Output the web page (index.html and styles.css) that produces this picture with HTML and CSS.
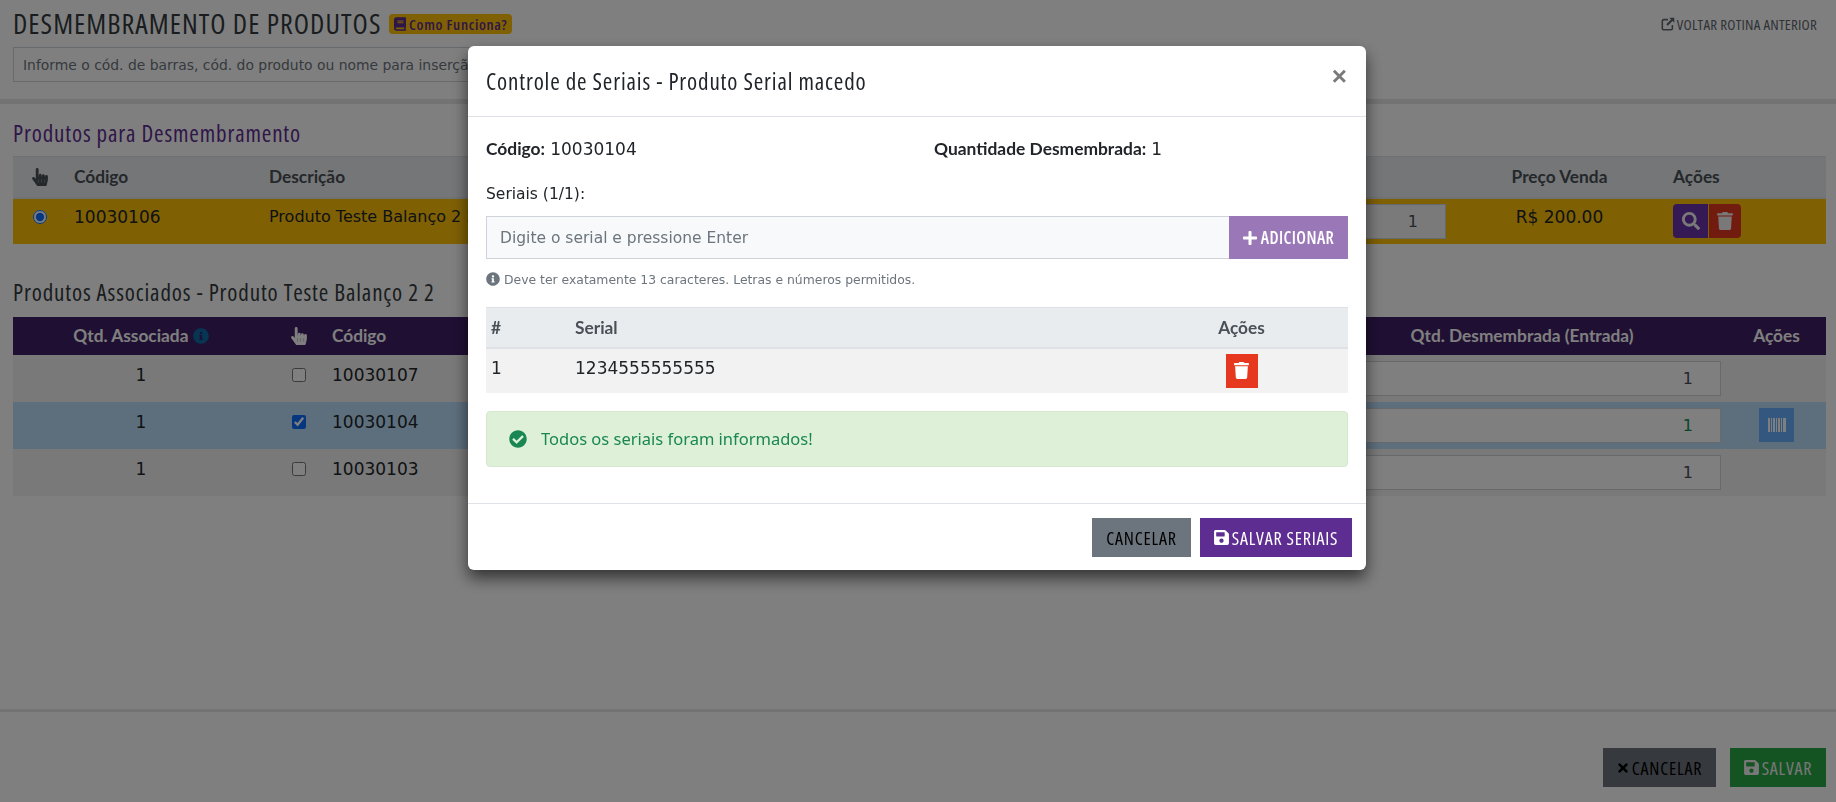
FILE: index.html
```html
<!DOCTYPE html>
<html lang="pt-BR">
<head>
<meta charset="utf-8">
<title>Desmembramento de Produtos</title>
<link rel="stylesheet" href="styles.css">
</head>
<body>
<svg class="sprite" aria-hidden="true">
  <symbol id="i-trash" viewBox="0 0 448 512"><path d="M432 32H312l-9.4-18.7A24 24 0 0 0 281.1 0H166.8a23.72 23.72 0 0 0-21.4 13.3L136 32H16A16 16 0 0 0 0 48v32a16 16 0 0 0 16 16h416a16 16 0 0 0 16-16V48a16 16 0 0 0-16-16zM53.2 467a48 48 0 0 0 47.9 45h245.8a48 48 0 0 0 47.9-45L416 128H32z"/></symbol>
  <symbol id="i-search" viewBox="0 0 512 512"><path d="M505 442.7L405.3 343c-4.5-4.5-10.6-7-17-7H372c27.6-35.3 44-79.7 44-128C416 93.1 322.9 0 208 0S0 93.1 0 208s93.1 208 208 208c48.3 0 92.7-16.4 128-44v16.3c0 6.4 2.5 12.5 7 17l99.7 99.7c9.4 9.4 24.6 9.4 33.9 0l28.3-28.3c9.4-9.4 9.4-24.6.1-34zM208 336c-70.7 0-128-57.2-128-128 0-70.7 57.2-128 128-128 70.7 0 128 57.2 128 128 0 70.7-57.2 128-128 128z"/></symbol>
  <symbol id="i-save" viewBox="0 0 448 512"><path d="M433.941 129.941l-83.882-83.882A48 48 0 0 0 316.118 32H48C21.49 32 0 53.49 0 80v352c0 26.51 21.49 48 48 48h352c26.51 0 48-21.49 48-48V163.882a48 48 0 0 0-14.059-33.941zM224 416c-35.346 0-64-28.654-64-64 0-35.346 28.654-64 64-64s64 28.654 64 64c0 35.346-28.654 64-64 64zm96-304.52V212c0 6.627-5.373 12-12 12H76c-6.627 0-12-5.373-12-12V108c0-6.627 5.373-12 12-12h228.52c3.183 0 6.235 1.264 8.485 3.515l3.48 3.48A11.996 11.996 0 0 1 320 111.48z"/></symbol>
  <symbol id="i-info" viewBox="0 0 512 512"><path d="M256 8C119.043 8 8 119.083 8 256c0 136.997 111.043 248 248 248s248-111.003 248-248C504 119.083 392.957 8 256 8zm0 110c23.196 0 42 18.804 42 42s-18.804 42-42 42-42-18.804-42-42 18.804-42 42-42zm56 254c0 6.627-5.373 12-12 12h-88c-6.627 0-12-5.373-12-12v-24c0-6.627 5.373-12 12-12h12v-64h-12c-6.627 0-12-5.373-12-12v-24c0-6.627 5.373-12 12-12h64c6.627 0 12 5.373 12 12v100h12c6.627 0 12 5.373 12 12v24z"/></symbol>
  <symbol id="i-check" viewBox="0 0 512 512"><path d="M504 256c0 136.967-111.033 248-248 248S8 392.967 8 256 119.033 8 256 8s248 111.033 248 248zM227.314 387.314l184-184c6.248-6.248 6.248-16.379 0-22.627l-22.627-22.627c-6.248-6.249-16.379-6.249-22.628 0L216 308.118l-70.059-70.059c-6.248-6.248-16.379-6.248-22.628 0l-22.627 22.627c-6.248 6.248-6.248 16.379 0 22.627l104 104c6.249 6.249 16.379 6.249 22.628.001z"/></symbol>
  <symbol id="i-plus" viewBox="0 0 448 512"><path d="M416 208H272V64c0-17.67-14.33-32-32-32h-32c-17.67 0-32 14.33-32 32v144H32c-17.67 0-32 14.33-32 32v32c0 17.67 14.33 32 32 32h144v144c0 17.67 14.33 32 32 32h32c17.67 0 32-14.33 32-32V304h144c17.67 0 32-14.33 32-32v-32c0-17.67-14.33-32-32-32z"/></symbol>
  <symbol id="i-times" viewBox="0 0 352 512"><path d="M242.72 256l100.07-100.07c12.28-12.28 12.28-32.19 0-44.48l-22.24-22.24c-12.28-12.28-32.19-12.28-44.48 0L176 189.28 75.93 89.21c-12.28-12.28-32.19-12.28-44.48 0L9.21 111.45c-12.28 12.28-12.28 32.19 0 44.48L109.28 256 9.21 356.07c-12.28 12.28-12.28 32.19 0 44.48l22.24 22.24c12.28 12.28 32.2 12.28 44.48 0L176 322.72l100.07 100.07c12.28 12.28 32.2 12.28 44.48 0l22.24-22.24c12.28-12.28 12.28-32.19 0-44.48L242.72 256z"/></symbol>
  <symbol id="i-book" viewBox="0 0 448 512"><path d="M448 360V24c0-13.3-10.7-24-24-24H96C43 0 0 43 0 96v320c0 53 43 96 96 96h328c13.3 0 24-10.7 24-24v-16c0-7.5-3.5-14.3-8.9-18.7-4.2-15.4-4.2-59.3 0-74.7 5.4-4.3 8.9-11.1 8.9-18.6zM128 134c0-3.3 2.7-6 6-6h212c3.3 0 6 2.7 6 6v20c0 3.3-2.7 6-6 6H134c-3.3 0-6-2.7-6-6v-20zm0 64c0-3.3 2.7-6 6-6h212c3.3 0 6 2.7 6 6v20c0 3.3-2.7 6-6 6H134c-3.3 0-6-2.7-6-6v-20zm253.4 250H96c-17.7 0-32-14.3-32-32 0-17.6 14.4-32 32-32h285.4c-1.9 17.1-1.9 46.9 0 64z"/></symbol>
  <symbol id="i-hand" viewBox="0 0 448 512"><path d="M448 240v96c0 3.084-.356 6.159-1.063 9.162l-32 136C410.686 499.23 394.562 512 376 512H168a40.004 40.004 0 0 1-32.35-16.473l-127.997-176c-12.993-17.866-9.043-42.883 8.822-55.876 17.867-12.994 42.884-9.043 55.877 8.823L104 315.992V40c0-22.091 17.908-40 40-40s40 17.909 40 40v200h8v-40c0-22.091 17.908-40 40-40s40 17.909 40 40v40h8v-24c0-22.091 17.908-40 40-40s40 17.909 40 40v24h8c0-22.091 17.908-40 40-40s40 17.909 40 40zm-256 80h-8v96h8v-96zm88 0h-8v96h8v-96zm88 0h-8v96h8v-96z"/></symbol>
  <symbol id="i-link" viewBox="0 0 16 16"><path d="M8 3H3a1.5 1.5 0 0 0-1.5 1.5v8.500A1.500 1.500 0 0 0 3 14.500h8.500A1.500 1.500 0 0 0 13 13V9" fill="none" stroke="currentColor" stroke-width="1.800"/><path d="M9.500 .8h5.700v5.700l-2-2-5.500 5.500-1.700-1.700 5.500-5.500z"/></symbol>
  <symbol id="i-barcode" viewBox="0 0 18 14"><path d="M0 0h2v14H0zM3 0h1v14H3zM5 0h2v14H5zM8 0h1v14H8zM10 0h2v14h-2zM13 0h1v14h-1zM15 0h3v14h-3z"/></symbol>
</svg>

<div class="page">
  <header class="top">
    <div class="top-row">
      <h1 class="page-title">DESMEMBRAMENTO DE PRODUTOS</h1>
      <span class="help-badge"><svg class="ico ico-book"><use href="#i-book"/></svg>Como Funciona?</span>
      <a class="back-link"><svg class="ico ico-link"><use href="#i-link"/></svg>VOLTAR ROTINA ANTERIOR</a>
    </div>
    <input class="search" type="text" placeholder="Informe o cód. de barras, cód. do produto ou nome para inserção e busca de produtos">
  </header>

  <main class="content">
    <h2 class="section-title purple">Produtos para Desmembramento</h2>
    <table class="grid grid-a">
      <colgroup><col class="a1"><col class="a2"><col class="a3"><col class="a4"><col class="a5"><col class="a6"></colgroup>
      <thead>
        <tr><th class="center"><svg class="ico ico-hand"><use href="#i-hand"/></svg></th><th class="pad">Código</th><th>Descrição</th><th></th><th class="center">Preço Venda</th><th>Ações</th></tr>
      </thead>
      <tbody>
        <tr class="row-amber">
          <td class="center top-cell"><input class="radio" type="radio" checked></td>
          <td class="num pad top-cell">10030106</td>
          <td class="top-cell">Produto Teste Balanço 2 2</td>
          <td class="qty-cell"><input class="qty qty-a num" value="1"></td>
          <td class="center num top-cell">R$ 200.00</td>
          <td><div class="btn-group"><span class="act act-purple"><svg class="ico ico-act"><use href="#i-search"/></svg></span><span class="act act-red"><svg class="ico ico-act"><use href="#i-trash"/></svg></span></div></td>
        </tr>
      </tbody>
    </table>

    <h2 class="section-title second">Produtos Associados - Produto Teste Balanço 2 2</h2>
    <table class="grid grid-b">
      <colgroup><col class="b1"><col class="b2"><col class="b3"><col class="b4"><col class="b5"><col class="b6"></colgroup>
      <thead>
        <tr><th class="center">Qtd. Associada <svg class="ico ico-th-info"><use href="#i-info"/></svg></th><th class="center"><svg class="ico ico-hand"><use href="#i-hand"/></svg></th><th class="pad-s">Código</th><th></th><th class="center">Qtd. Desmembrada (Entrada)</th><th class="center pad-act">Ações</th></tr>
      </thead>
      <tbody>
        <tr class="row-grey">
          <td class="center num lift">1</td><td class="center lift"><input class="check" type="checkbox"></td><td class="num pad-s lift">10030107</td><td></td>
          <td><input class="qty qty-b num" value="1"></td><td></td>
        </tr>
        <tr class="row-blue">
          <td class="center num lift">1</td><td class="center lift"><input class="check" type="checkbox" checked></td><td class="num pad-s lift">10030104</td><td></td>
          <td><input class="qty qty-b qty-ok num" value="1"></td><td class="center pad-act"><span class="barcode-btn"><svg class="ico ico-barcode"><use href="#i-barcode"/></svg></span></td>
        </tr>
        <tr class="row-grey">
          <td class="center num lift">1</td><td class="center lift"><input class="check" type="checkbox"></td><td class="num pad-s lift">10030103</td><td></td>
          <td><input class="qty qty-b num" value="1"></td><td></td>
        </tr>
      </tbody>
    </table>
  </main>

  <footer class="bottom">
    <button class="btn btn-dark"><svg class="ico ico-x"><use href="#i-times"/></svg>CANCELAR</button>
    <button class="btn btn-green"><svg class="ico ico-save"><use href="#i-save"/></svg>SALVAR</button>
  </footer>
</div>

<div class="backdrop">
  <section class="modal">
    <div class="modal-head">
      <h3 class="modal-title">Controle de Seriais - Produto Serial macedo</h3>
      <span class="close">&times;</span>
    </div>
    <div class="modal-body">
      <div class="facts">
        <div class="fact"><strong>Código:</strong> <span class="num">10030104</span></div>
        <div class="fact"><strong>Quantidade Desmembrada:</strong> <span class="num">1</span></div>
      </div>
      <label class="serial-label">Seriais (1/1):</label>
      <div class="input-group">
        <input class="serial-input" type="text" placeholder="Digite o serial e pressione Enter">
        <span class="add-btn"><svg class="ico ico-plus"><use href="#i-plus"/></svg>ADICIONAR</span>
      </div>
      <p class="hint"><svg class="ico ico-hint"><use href="#i-info"/></svg>Deve ter exatamente 13 caracteres. Letras e números permitidos.</p>
      <table class="serials">
        <colgroup><col class="s1"><col class="s2"><col class="s3"></colgroup>
        <thead><tr><th>#</th><th>Serial</th><th class="center">Ações</th></tr></thead>
        <tbody><tr><td class="num lift">1</td><td class="num lift">1234555555555</td><td class="center"><span class="del"><svg class="ico ico-del"><use href="#i-trash"/></svg></span></td></tr></tbody>
      </table>
      <div class="alert"><svg class="ico ico-ok"><use href="#i-check"/></svg>Todos os seriais foram informados!</div>
    </div>
    <div class="modal-foot">
      <button class="btn btn-grey">CANCELAR</button>
      <button class="btn btn-purple"><svg class="ico ico-save"><use href="#i-save"/></svg>SALVAR SERIAIS</button>
    </div>
  </section>
</div>
</body>
</html>
```

FILE: styles.css
```css
* { box-sizing: border-box; }
html, body { margin: 0; padding: 0; height: 100%; overflow: hidden; }
body { font-family: "DejaVu Sans", "Noto Sans", sans-serif; color: #212529; background: #fff; font-size: 16px; }
.sprite { display: none; }
.ico { fill: currentColor; display: inline-block; flex: none; }
.num { font-family: "DejaVu Sans", sans-serif; font-size: 17px; }
.center { text-align: center; }
.page-title, .help-badge, .back-link, .section-title, .modal-title, .btn, .add-btn { font-family: "Open Sans", sans-serif; font-stretch: 75%; }
.grid th, .serials th, .fact strong { font-family: "Lato", sans-serif; font-weight: 700; }

.page { height: 802px; display: flex; flex-direction: column; }
.top { height: 104px; padding: 12px 10px 0 13px; border-bottom: 5px solid #e6e6e6; }
.top-row { display: flex; align-items: center; height: 23px; }
.page-title { margin: 0; font-weight: 400; font-size: 28px; letter-spacing: 1.050px; line-height: 23px; color: #343a40; width: 376px; white-space: nowrap; }
.help-badge { display: flex; align-items: center; height: 20px; padding: 0 5px; background: #ffc107; border-radius: 4px; color: #5e2d91; font-size: 15px; letter-spacing: .65px; font-weight: 600; }
.ico-book { width: 12px; height: 14px; margin-right: 3px; }
.back-link { margin: 0 9px 0 auto; display: flex; align-items: center; font-size: 15px; letter-spacing: .2px; color: #5f6770; }
.ico-link { width: 14px; height: 14px; margin-right: 2px; }
.search { display: block; width: 1000px; height: 35px; margin-top: 12px; border: 1px solid #ced4da; padding: 0 9px; font: 400 13.900px "DejaVu Sans", sans-serif; background: #fff; }
.search::placeholder { color: #6c757d; }

.content { padding: 0 10px 0 13px; flex: 1; }
.section-title { margin: 16px 0 10px; font-weight: 400; font-size: 23px; letter-spacing: .85px; line-height: 26px; color: #343a40; }
.purple { color: #5e2d91; }
.second { margin: 35px 0 12px; }

.grid { width: 100%; table-layout: fixed; border-collapse: collapse; font-size: 16px; }
.grid th { font-size: 17.300px; text-align: left; padding: 0; }
.grid th.center { text-align: center; }
.grid td { padding: 0; vertical-align: middle; }
.grid .pad { padding-left: 7px; }
.grid .pad-s { padding-left: 3px; }
.grid .pad-act { padding-left: 6px; }
.grid .lift { padding-bottom: 6px; }
.grid-a thead tr { height: 41px; background: #e9ecef; color: #495057; border-top: 1px solid #dee2e6; border-bottom: 2px solid #dee2e6; }
.grid-a tbody tr { height: 46px; }
.row-amber { background: #ffc107; }
.grid .top-cell { vertical-align: top; padding-top: 8px; }
.a1 { width: 54px; } .a2 { width: 202px; } .a3 { width: 660px; } .a4 { width: 517px; } .a5 { width: 227px; } .a6 { width: 153px; }
.ico-hand { width: 16px; height: 18px; vertical-align: -3px; }

.grid-b thead tr { height: 38px; background: #3f1f66; color: #fff; }
.grid-b tbody tr { height: 47px; }
.row-grey { background: #f2f2f2; }
.row-blue { background: #bbdefb; }
.b1 { width: 256px; } .b2 { width: 60px; } .b3 { width: 500px; } .b4 { width: 494px; } .b5 { width: 398px; } .b6 { width: 105px; }
.ico-th-info { width: 16px; height: 16px; color: #0f6aa8; vertical-align: -2px; }

.qty { height: 35px; border: 1px solid #ced4da; background: #fff; text-align: right; font-size: 16px; color: #495057; padding: 0 27px 0 0; }
.qty-a { width: 100%; display: block; background: #f4f4f4; }
.qty-b { width: 100%; display: block; }
.qty-ok { color: #198754; }
.radio, .check { margin: 0; vertical-align: middle; width: 14px; height: 14px; accent-color: #0d6efd; }
.check { margin-bottom: 3px; }
.btn-group { display: flex; gap: 1px; width: 68px; }
.act { height: 34px; display: flex; align-items: center; justify-content: center; color: #f3f3f3; }
.act-purple { background: #6a32a8; border-radius: 4px 0 0 4px; width: 35px; }
.act-red { background: #e5381f; border-radius: 0 4px 4px 0; width: 32px; }
.ico-act { width: 18px; height: 18px; }
.barcode-btn { width: 35px; height: 34px; background: #66aefd; display: inline-flex; align-items: center; justify-content: center; color: #fff; vertical-align: middle; }
.ico-barcode { width: 18px; height: 14px; }

.bottom { height: 93px; border-top: 3px solid #e6e6e6; display: flex; justify-content: flex-end; align-items: flex-start; gap: 14px; padding: 36px 10px 0 0; }
.btn { border: 0; height: 39px; display: inline-flex; align-items: center; justify-content: center; font-size: 18px; letter-spacing: .8px; font-weight: 400; padding: 0; white-space: nowrap; }
.btn-dark { width: 113px; background: #6c757d; color: #000; }
.btn-green { width: 96px; background: #28a745; color: #f0f0f0; }
.ico-x { width: 12px; height: 14px; margin-right: 3px; }
.ico-save { width: 15px; height: 17px; margin-right: 3px; }

.backdrop { position: fixed; inset: 0; background: rgba(0, 0, 0, .5); }
.modal { width: 898px; height: 524px; margin: 46px 0 0 468px; background: #fff; border-radius: 6px; box-shadow: 0 8px 16px rgba(0, 0, 0, .6); display: flex; flex-direction: column; }
.modal-head { height: 71px; padding: 0 18px; border-bottom: 1px solid #dee2e6; display: flex; align-items: center; justify-content: space-between; flex: none; }
.modal-title { margin: 0; font-weight: 400; font-size: 23px; letter-spacing: .85px; color: #212529; }
.close { font: 700 26px/1 "Liberation Sans", sans-serif; color: #7a7a7a; margin: -10px 1px 0 0; }
.modal-body { flex: 1; padding: 19px 18px 0; }
.facts { display: flex; height: 24px; align-items: center; }
.fact { font-size: 16px; }
.fact:first-child { width: 448px; }
.fact strong { font-size: 17.400px; }
.serial-label { display: block; margin-top: 22px; height: 34px; line-height: 24px; font-size: 15.500px; }
.input-group { display: flex; height: 43px; }
.serial-input { flex: 1; border: 1px solid #ced4da; border-right: 0; background: #f8f9fa; padding: 0 13px; font: 400 15.500px "DejaVu Sans", sans-serif; }
.serial-input::placeholder { color: #6c757d; }
.add-btn { width: 119px; background: #9a78b8; color: #fff; display: flex; align-items: center; justify-content: center; font-size: 17px; letter-spacing: .4px; font-weight: 600; }
.ico-plus { width: 14px; height: 16px; margin-right: 4px; }
.hint { margin: 11px 0 0; height: 18px; display: flex; align-items: center; color: #6c757d; font-size: 12.400px; }
.ico-hint { width: 14px; height: 14px; margin-right: 4px; }
.serials { width: 100%; table-layout: fixed; border-collapse: collapse; margin-top: 19px; }
.s1 { width: 84px; } .s3 { width: 213px; }
.serials th { height: 40px; background: #e9ecef; color: #495057; font-size: 17.300px; text-align: left; padding: 0 5px; border-top: 1px solid #dee2e6; border-bottom: 2px solid #dee2e6; }
.serials th.center { text-align: center; }
.serials td { height: 45px; background: #f2f2f2; padding: 0 5px; }
.serials .lift { padding-bottom: 6px; }
.del { display: inline-flex; width: 32px; height: 34px; background: #e5381f; color: #fff; align-items: center; justify-content: center; vertical-align: middle; }
.ico-del { width: 15px; height: 17px; }
.alert { height: 56px; margin-top: 18px; background: #dff0d8; border: 1px solid #d5e8ce; border-radius: 4px; display: flex; align-items: center; padding-left: 22px; color: #198754; font: 400 16.500px "Noto Sans", sans-serif; }
.ico-ok { width: 18px; height: 18px; margin-right: 14px; color: #198754; }
.modal-foot { height: 67px; flex: none; border-top: 1px solid #dee2e6; display: flex; justify-content: flex-end; gap: 9px; padding: 14px 14px 0 0; }
.btn-grey { width: 99px; background: #6c757d; color: #000; }
.btn-purple { width: 152px; background: #5e2d91; color: #fff; }
```
